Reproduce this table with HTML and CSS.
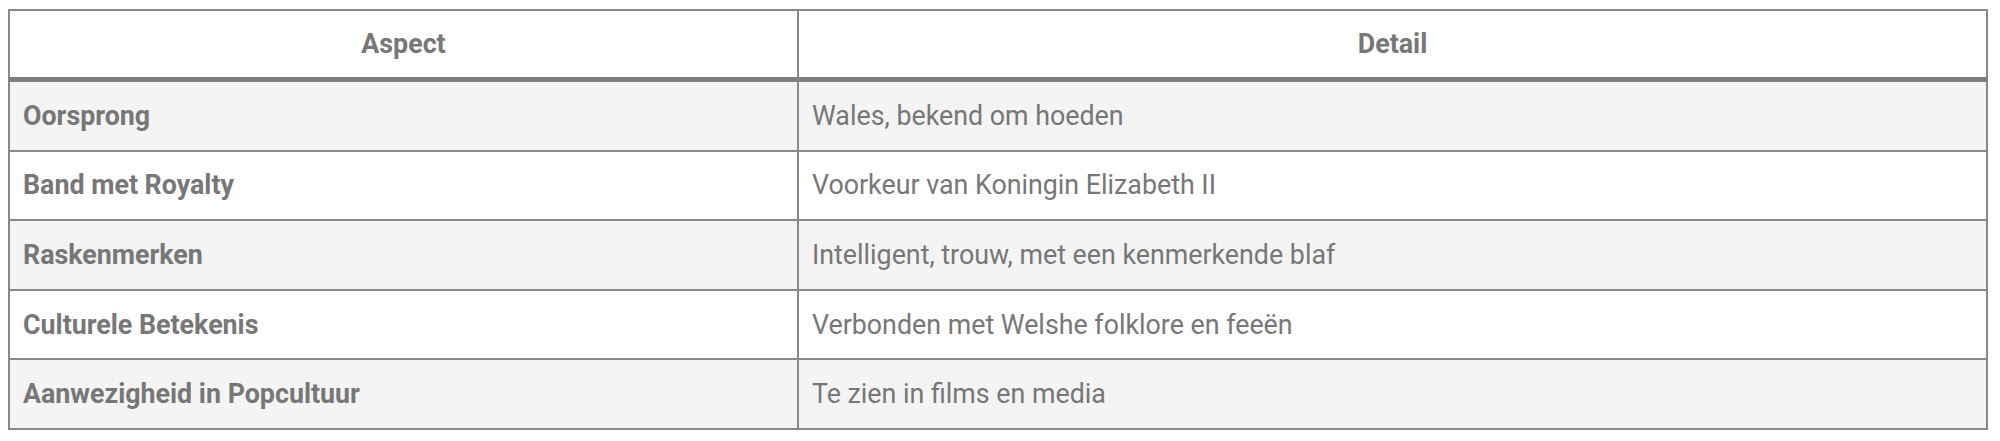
FILE: index.html
```html
<!DOCTYPE html>
<html lang="nl">
<head>
<meta charset="utf-8">
<title>Corgi</title>
<link rel="stylesheet" href="styles.css">
</head>
<body>
<table class="info">
  <thead>
    <tr><th class="col-aspect">Aspect</th><th class="col-detail">Detail</th></tr>
  </thead>
  <tbody>
    <tr><td class="key">Oorsprong</td><td>Wales, bekend om hoeden</td></tr>
    <tr><td class="key">Band met Royalty</td><td>Voorkeur van Koningin Elizabeth II</td></tr>
    <tr><td class="key">Raskenmerken</td><td>Intelligent, trouw, met een kenmerkende blaf</td></tr>
    <tr><td class="key">Culturele Betekenis</td><td>Verbonden met Welshe folklore en feeën</td></tr>
    <tr><td class="key">Aanwezigheid in Popcultuur</td><td>Te zien in films en media</td></tr>
  </tbody>
</table>
</body>
</html>
```
FILE: styles.css
```css
html, body {
  margin: 0;
  background: #ffffff;
}
body {
  padding: 9px 8px;
  font-family: Roboto, "Liberation Sans", sans-serif;
  color: #777777;
}
.info {
  width: 1980px;
  border-collapse: collapse;
  border: 2px solid #888888;
  font-size: 26.8px;
}
.info th, .info td {
  border: 2px solid #888888;
  padding: 0 13px;
  height: 67.6px;
  text-align: left;
}
.info th {
  text-align: center;
  font-weight: 700;
  background: #ffffff;
}
.info thead th {
  border-bottom: 5px solid #7f7f7f;
  height: 66px;
}
.col-aspect { width: 761px; }
.key { font-weight: 700; }
.info tbody tr:nth-child(odd) { background: #f4f4f4; }
.info tbody tr:nth-child(even) { background: #ffffff; }
```
